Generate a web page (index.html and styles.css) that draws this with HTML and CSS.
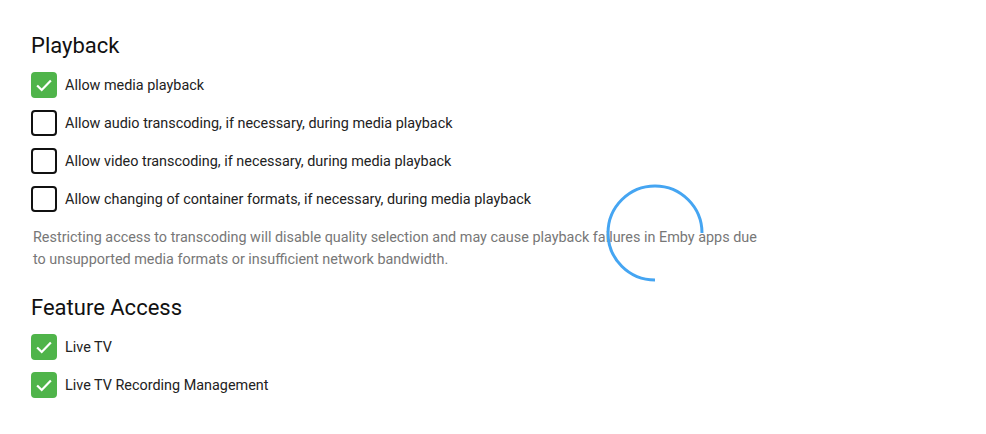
FILE: index.html
```html
<!DOCTYPE html>
<html>
<head>
  <meta charset="UTF-8">
  <title>User Access</title>
  <link rel="stylesheet" href="styles.css">
</head>
<body>
  <div class="page">
    <h2 class="section-title">Playback</h2>
    <label class="check-row">
      <span class="check-box checked"><svg viewBox="0 0 24 24"><path d="M4.5 12.5l5 5L19.5 7"/></svg></span>
      <span class="check-label">Allow media playback</span>
    </label>
    <label class="check-row">
      <span class="check-box"></span>
      <span class="check-label">Allow audio transcoding, if necessary, during media playback</span>
    </label>
    <label class="check-row">
      <span class="check-box"></span>
      <span class="check-label">Allow video transcoding, if necessary, during media playback</span>
    </label>
    <label class="check-row">
      <span class="check-box"></span>
      <span class="check-label">Allow changing of container formats, if necessary, during media playback</span>
    </label>
    <p class="field-description">Restricting access to transcoding will disable quality selection and may cause playback failures in Emby apps due to unsupported media formats or insufficient network bandwidth.</p>

    <h2 class="section-title">Feature Access</h2>
    <label class="check-row">
      <span class="check-box checked"><svg viewBox="0 0 24 24"><path d="M4.5 12.5l5 5L19.5 7"/></svg></span>
      <span class="check-label">Live TV</span>
    </label>
    <label class="check-row">
      <span class="check-box checked"><svg viewBox="0 0 24 24"><path d="M4.5 12.5l5 5L19.5 7"/></svg></span>
      <span class="check-label">Live TV Recording Management</span>
    </label>
  </div>
  <div class="spinner">
    <svg viewBox="0 0 100 100"><path d="M97 50 A47 47 0 1 0 50 97"/></svg>
  </div>
</body>
</html>
```

FILE: styles.css
```css
body {
  margin: 0;
  font-family: Roboto, "Liberation Sans", sans-serif;
  background: #fff;
  color: #222;
}
.page {
  padding: 33px 31px 0 31px;
}
.section-title {
  margin: 0 0 13px 0;
  font-size: 22px;
  font-weight: 400;
  line-height: 26px;
  color: #111;
}
.check-row {
  display: flex;
  align-items: center;
  gap: 8px;
  height: 26px;
  margin-bottom: 12px;
  cursor: pointer;
}
.check-box {
  box-sizing: border-box;
  width: 26px;
  height: 26px;
  border: 2px solid #111;
  border-radius: 4px;
  flex-shrink: 0;
  display: flex;
  align-items: center;
  justify-content: center;
}
.check-box.checked {
  background: #4fb44a;
  border-color: #4fb44a;
}
.check-box svg {
  width: 24px;
  height: 24px;
  fill: none;
  stroke: #fff;
  stroke-width: 2.4;
}
.check-label {
  font-size: 14.4px;
  color: #222;
}
.field-description {
  margin: 15px 0 24px 2px;
  max-width: 732px;
  font-size: 14.4px;
  line-height: 22px;
  color: #777;
}
.spinner {
  position: absolute;
  left: 605px;
  top: 183px;
  width: 100px;
  height: 100px;
}
.spinner svg {
  width: 100px;
  height: 100px;
  fill: none;
  stroke: #45a5f2;
  stroke-width: 3;
}
```
